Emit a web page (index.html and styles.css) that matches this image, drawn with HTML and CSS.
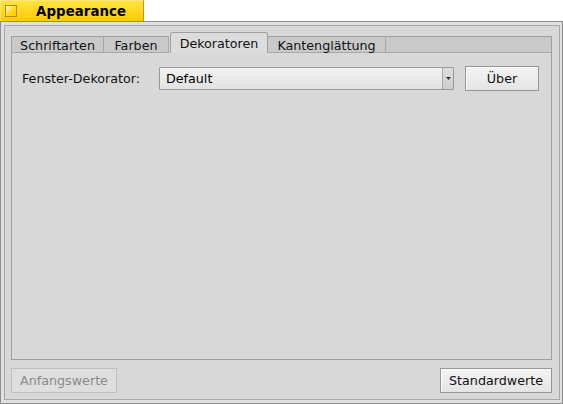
FILE: index.html
```html
<!DOCTYPE html>
<html>
<head>
<meta charset="utf-8">
<link rel="stylesheet" href="styles.css">
</head>
<body>
<div class="window">
  <div class="titlebar">
    <div class="wtab">
      <span class="close"></span>
      <span class="wtitle">Appearance</span>
    </div>
  </div>
  <div class="frame">
    <div class="content">
      <div class="tabview">
        <div class="tabs">
          <div class="tab t1">Schriftarten</div>
          <div class="tab t2">Farben</div>
          <div class="tab active">Dekoratoren</div>
          <div class="tab t4">Kantenglättung</div>
          <div class="tabfill"></div>
        </div>
        <div class="panel">
          <div class="row">
            <span class="label">Fenster-Dekorator:</span>
            <div class="popup">
              <span class="ptext">Default</span>
              <span class="parrow"><svg width="5" height="3" viewBox="0 0 5 3"><path d="M0 0h5L2.5 3z" fill="#333"/></svg></span>
            </div>
            <div class="btn about">Über</div>
          </div>
        </div>
      </div>
      <div class="bottom">
        <div class="btn disabled revert">Anfangswerte</div>
        <div class="btn defaults">Standardwerte</div>
      </div>
    </div>
  </div>
</div>
</body>
</html>
```
FILE: styles.css
```css
html, body {
  margin: 0;
  padding: 0;
  background: #ffffff;
}
body {
  width: 563px;
  height: 404px;
  overflow: hidden;
  font-family: "DejaVu Sans", sans-serif;
  font-size: 12.7px;
  color: #000;
}
.window {
  display: flex;
  flex-direction: column;
  width: 563px;
  height: 404px;
}
.titlebar {
  height: 21px;
  display: flex;
}
.wtab {
  width: 144px;
  height: 21px;
  box-sizing: border-box;
  border: 1px solid #c59a00;
  border-bottom: none;
  border-left-color: #ffe680;
  border-top-color: #ffe680;
  background: linear-gradient(#ffe340, #ffcb00);
  display: flex;
  align-items: center;
}
.close {
  width: 12px;
  height: 12px;
  margin-left: 4px;
  box-sizing: border-box;
  border: 1px solid #b58e00;
  background: linear-gradient(135deg, #fff7c8, #ffd000 70%);
}
.wtitle {
  margin-left: 19px;
  font-weight: bold;
  font-size: 13.3px;
  letter-spacing: 0.1px;
}
.frame {
  flex: 1;
  box-sizing: border-box;
  border: 1px solid #8c8c8c;
  background: #e0e0e0;
  padding: 3px;
  display: flex;
}
.content {
  flex: 1;
  border: 1px solid #a8a8a8;
  background: #d8d8d8;
  display: flex;
  flex-direction: column;
  padding: 6px 7px 6px 6px;
}
.tabview {
  flex: 1;
  display: flex;
  flex-direction: column;
}
.tabs {
  height: 21px;
  display: flex;
  align-items: flex-end;
}
.tab {
  height: 17px;
  box-sizing: border-box;
  background: #c9c9c9;
  border-top: 1px solid #a0a0a0;
  border-bottom: 1px solid #a8a8a8;
  border-right: 1px solid #a8a8a8;
  display: flex;
  align-items: center;
  justify-content: center;
  color: #111;
  padding-top: 1px;
}
.t1 { width: 93px; border-left: 1px solid #a0a0a0; }
.t2 { width: 65px; }
.t4 { width: 118px; border-left: none; }
.tab.active {
  width: 98px;
  height: 21px;
  margin-left: 1px;
  background: #dcdcdc;
  border: 1px solid #a0a0a0;
  border-bottom: none;
  border-radius: 3px 3px 0 0;
  padding-top: 0;
}
.tabfill {
  flex: 1;
  height: 17px;
  box-sizing: border-box;
  background: #c9c9c9;
  border-top: 1px solid #a0a0a0;
  border-bottom: 1px solid #a8a8a8;
  border-right: 1px solid #a0a0a0;
}
.panel {
  flex: 1;
  border: 1px solid #a0a0a0;
  border-top: none;
  background: #d8d8d8;
  padding: 13px 12px 0 10px;
}
.row {
  display: flex;
  align-items: center;
  height: 24px;
}
.label {
  width: 137px;
  color: #111;
}
.popup {
  width: 295px;
  height: 23px;
  box-sizing: border-box;
  border: 1px solid #9a9a9a;
  border-radius: 1px;
  background: linear-gradient(#f2f2f2, #e2e2e2);
  display: flex;
  align-items: center;
}
.ptext {
  flex: 1;
  padding-left: 6px;
}
.parrow {
  width: 11px;
  height: 21px;
  box-sizing: border-box;
  border-left: 1px solid #a8a8a8;
  background: linear-gradient(#dedede, #cdcdcd);
  display: flex;
  align-items: center;
  justify-content: center;
}
.btn {
  height: 25px;
  box-sizing: border-box;
  border: 1px solid #969696;
  background: linear-gradient(#f4f4f4, #e4e4e4);
  box-shadow: inset 1px 1px 0 #fafafa;
  display: flex;
  align-items: center;
  justify-content: center;
  color: #111;
}
.about {
  width: 74px;
  margin-left: 11px;
}
.bottom {
  height: 25px;
  margin-top: 8px;
  display: flex;
  justify-content: space-between;
}
.revert {
  width: 106px;
}
.disabled {
  color: #8a8a8a;
  border-color: #c0c0c0;
  background: #dedede;
  box-shadow: none;
}
.defaults {
  width: 112px;
}
```
